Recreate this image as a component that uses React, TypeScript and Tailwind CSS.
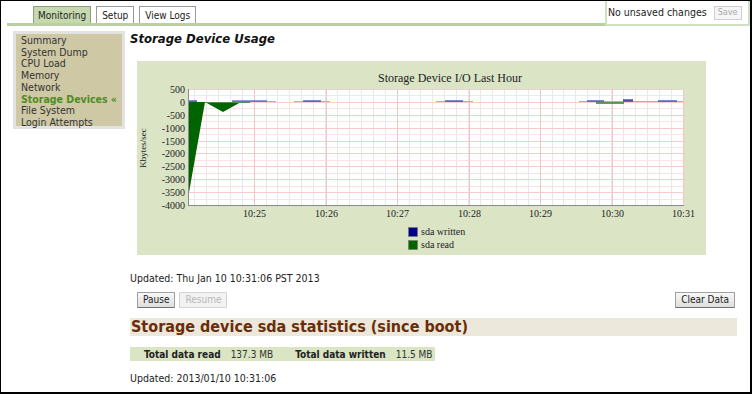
import React from "react";

const tabs = [
  { label: "Monitoring", active: true },
  { label: "Setup", active: false },
  { label: "View Logs", active: false },
];

const menu = [
  "Summary",
  "System Dump",
  "CPU Load",
  "Memory",
  "Network",
  "Storage Devices «",
  "File System",
  "Login Attempts",
];

const ui = "font-['DejaVu_Sans_Condensed','DejaVu_Sans',sans-serif]";

// chart helpers (page coordinates, svg viewBox matches the panel position)
const yOf = (v: number) => Math.round(89 + (500 - v) * (116 / 4500)) + 0.5;
const minuteX = (m: number) => Math.round(254 + m * 71.5) + 0.5;

function IoChart() {
  const yTicks = [500, 0, -500, -1000, -1500, -2000, -2500, -3000, -3500, -4000];
  const minor: number[] = [];
  for (let x = 254 - 12 * 5; x <= 683; x += 11.9167) minor.push(Math.round(x) + 0.5);
  const halfs: number[] = [];
  for (let v = 500; v >= -4000; v -= 250) halfs.push(v);

  // light + dark blue segments for sda written
  const blueLight = [
    [188, 197],
    [232, 276],
    [294, 330],
    [436, 473],
    [579, 683],
  ];
  const blueDark = [
    [188, 197],
    [232, 267],
    [303, 321],
    [445, 463],
    [587, 604],
    [623, 633],
    [658, 677],
  ];

  return (
    <svg
      width={569}
      height={194}
      viewBox="137 61 569 194"
      className="block"
      fontFamily="'Liberation Serif', serif"
    >
      <rect x={137} y={61} width={569} height={194} fill="#dbe5c6" />
      <text x={450} y={82} fontSize={12} textAnchor="middle" fill="#222">
        Storage Device I/O Last Hour
      </text>
      <rect x={188} y={89} width={495} height={116} fill="#ffffff" />
      {minor.map((x, i) => (
        <line key={"m" + i} x1={x} x2={x} y1={89} y2={205} stroke="#e8e8e8" strokeWidth={1} />
      ))}
      {halfs.map((v, i) => (
        <line
          key={"h" + i}
          x1={188}
          x2={683}
          y1={yOf(v)}
          y2={yOf(v)}
          stroke={i % 2 === 0 ? "#f6cccc" : "#fae3e3"}
          strokeWidth={1}
        />
      ))}
      {[0, 1, 2, 3, 4, 5, 6].map((m) => (
        <line key={"v" + m} x1={minuteX(m)} x2={minuteX(m)} y1={89} y2={205} stroke="#f4c4c4" strokeWidth={1} />
      ))}
      {/* sda read */}
      <polygon points="188,102 205,102 188,198" fill="#006400" />
      <polygon points="205,102 223,112 241,102" fill="#006400" />
      <line x1={205} x2={250} y1={102.5} y2={102.5} stroke="#4f8f4f" strokeWidth={1} />
      <line x1={596} x2={624} y1={103} y2={103} stroke="#2e7d32" strokeWidth={1.5} />
      {/* sda written */}
      {blueLight.map(([a, b], i) => (
        <line key={"bl" + i} x1={a} x2={b} y1={101.5} y2={101.5} stroke="#a7aee4" strokeWidth={1} />
      ))}
      {blueDark.map(([a, b], i) => (
        <line key={"bd" + i} x1={a} x2={b} y1={101} y2={101} stroke="#2c39ad" strokeWidth={1.2} />
      ))}
      <line x1={623} x2={633} y1={100} y2={100} stroke="#1c2790" strokeWidth={1.2} />
      {/* axes */}
      <line x1={188.5} x2={188.5} y1={89} y2={205} stroke="#8a8a8a" strokeWidth={1} />
      <line x1={188} x2={684} y1={205.5} y2={205.5} stroke="#8a8a8a" strokeWidth={1} />
      {yTicks.map((v) => (
        <text key={v} x={185} y={yOf(v) + 3} fontSize={10} textAnchor="end" fill="#222">
          {v}
        </text>
      ))}
      {["10:25", "10:26", "10:27", "10:28", "10:29", "10:30", "10:31"].map((t, i) => (
        <text key={t} x={minuteX(i)} y={217} fontSize={10} textAnchor="middle" fill="#222">
          {t}
        </text>
      ))}
      <text
        x={146}
        y={148}
        fontSize={9}
        textAnchor="middle"
        fill="#222"
        transform="rotate(-90 146 148)"
      >
        Kbytes/sec
      </text>
      {/* legend */}
      <rect x={408.5} y={227.5} width={9} height={9} fill="#00008b" stroke="#777" strokeWidth={0.6} />
      <text x={421} y={235} fontSize={10} fill="#222">
        sda written
      </text>
      <rect x={408.5} y={240.5} width={9} height={9} fill="#006400" stroke="#777" strokeWidth={0.6} />
      <text x={421} y={248} fontSize={10} fill="#222">
        sda read
      </text>
    </svg>
  );
}

function Btn({ children, disabled }: { children: React.ReactNode; disabled?: boolean }) {
  return (
    <button
      disabled={disabled}
      className={`h-[16px] px-[5px] text-[10px] leading-none border rounded-[1px] ${
        disabled
          ? "text-[#b8b8b8] bg-[#f2f2f2] border-[#d4d4d4]"
          : "text-[#222] bg-gradient-to-b from-[#f8f8f8] to-[#dedede] border-[#a0a0a0] border-b-[#707070]"
      }`}
    >
      {children}
    </button>
  );
}

export default function App() {
  return (
    <div
      className={`${ui} w-[752px] h-[394px] bg-white border-l border-t border-r-2 border-b-2 border-black text-[#222] overflow-hidden`}
    >
      {/* Top tab bar */}
      <div className="flex h-[25px]">
        <div className="flex-1 ml-[6px] border-b-[3px] border-[#b9d1a2] flex items-end gap-[5px] pl-[26px]">
          {tabs.map((t) => (
            <div
              key={t.label}
              className={`h-[17px] flex items-center text-[10px] border border-b-0 ${
                t.active ? "px-[4px] bg-[#c6d9ae] border-[#8f9a80]" : "px-[5px] bg-white border-[#9a9a9a]"
              }`}
            >
              {t.label}
            </div>
          ))}
        </div>
        <div className="w-[145px] border-2 border-t-0 border-[#cfe1c0] flex items-center pl-[1px]">
          <span className="text-[10.5px]">No unsaved changes</span>
          <span className="ml-[7px] h-[14px] px-[3px] flex items-center border border-[#cfcfcf] text-[9px] text-[#a8a8a8] bg-[#f6f6f6]">
            Save
          </span>
        </div>
      </div>

      <div className="flex pt-[5px]">
        {/* sidebar */}
        <div className="ml-[12px] w-[112px] h-[98px] border-[3px] border-[#e2e2e2] shrink-0">
          <div className="bg-[#cec8a5] h-full pl-[5px] pt-[1px]">
            {menu.map((m, i) => (
              <div
                key={m}
                className={`text-[10.5px] leading-[11.7px] ${
                  i === 5 ? "font-bold text-[#4f8c1f]" : "text-[#333]"
                }`}
              >
                {m}
              </div>
            ))}
          </div>
        </div>

        {/* main content */}
        <div className="ml-[5px] flex-1 pr-[13px]">
          <h1 className="text-[13px] leading-[16px] font-bold italic text-[#111]">
            Storage Device Usage
          </h1>
          <div className="ml-[7px] mt-[14px]">
            <IoChart />
          </div>
          <p className="text-[10.5px] mt-[17px] leading-[12px]">Updated: Thu Jan 10 10:31:06 PST 2013</p>
          <div className="flex justify-between ml-[7px] mt-[8px] mr-[2px]">
            <div className="flex gap-[4px]">
              <Btn>Pause</Btn>
              <Btn disabled>Resume</Btn>
            </div>
            <Btn>Clear Data</Btn>
          </div>
          <div className="mt-[10px] bg-[#ece8dc] h-[18px] flex items-center pl-[1px]">
            <span className="text-[16px] font-bold text-[#6b2d08] leading-none">
              Storage device sda statistics (since boot)
            </span>
          </div>
          <div className="mt-[11px] inline-flex items-center bg-[#d9e5c3] h-[14px] text-[10px] pl-[14px] pr-[2px]">
            <span className="font-bold">Total data read</span>
            <span className="ml-[10px] text-[#333]">137.3 MB</span>
            <span className="ml-[22px] font-bold">Total data written</span>
            <span className="ml-[10px] text-[#333]">11.5 MB</span>
          </div>
          <p className="text-[10.5px] mt-[7px] leading-[12px]">Updated: 2013/01/10 10:31:06</p>
        </div>
      </div>
    </div>
  );
}
